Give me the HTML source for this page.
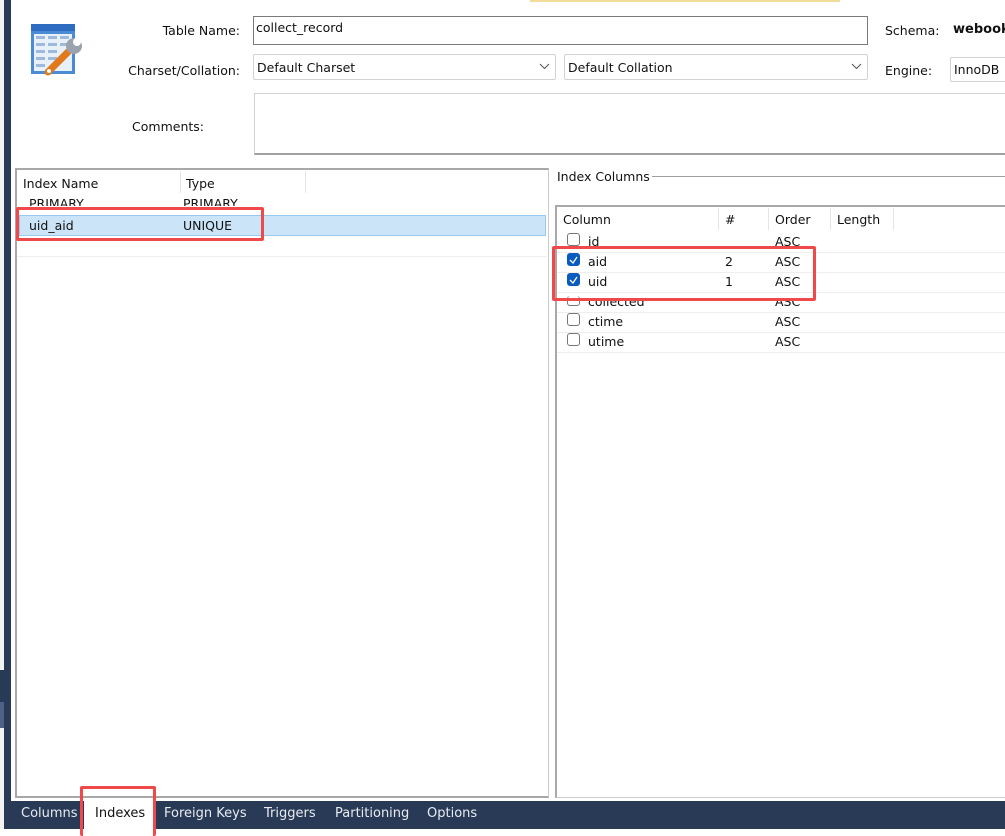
<!DOCTYPE html>
<html><head><meta charset="utf-8"><style>
*{margin:0;padding:0;box-sizing:border-box}
body{width:1005px;height:829px;overflow:hidden;background:#fff;font-family:"DejaVu Sans","Liberation Sans",sans-serif;font-size:12.5px;color:#111;position:relative}
.a{position:absolute}
.lbl{position:absolute;text-align:right;font-size:12.5px}
.box{position:absolute;border:1px solid #a9a9a9;background:#fff}
.sel{position:absolute;border:1px solid #d2d2d2;background:#fff;border-radius:2px;padding:5px 3px;font-size:12.5px}
.chev{position:absolute;right:5px;top:8px}
.cb{position:absolute;width:13px;height:13px;border:1px solid #777;border-radius:3px;background:#fff}
.cb.on{background:#0a5bc0;border-color:#0a5bc0}
.red{position:absolute;border:3px solid #f0494b;border-radius:2px}
.tab{position:absolute;top:806px;color:#e8ebf2;font-size:13px}
</style></head><body>
<div class="a" style="left:0;top:0;width:4px;height:670px;background:#f3f3f3"></div>
<div class="a" style="left:0;top:670px;width:4px;height:32px;background:#293a57"></div>
<div class="a" style="left:0;top:702px;width:4px;height:26px;background:#4d6189"></div>
<div class="a" style="left:0;top:728px;width:4px;height:101px;background:#f3f3f3"></div>
<div class="a" style="left:4px;top:0;width:7px;height:829px;background:#293a57"></div>
<div class="a" style="left:530px;top:0;width:310px;height:2px;background:#f3dc9a"></div>

<svg class="a" style="left:28px;top:22px" width="58" height="58" viewBox="0 0 58 58">
<rect x="3" y="2" width="44" height="50" fill="#4a8bd6"/>
<rect x="3" y="2" width="44" height="7" fill="#2d6cc0"/>
<rect x="6" y="12" width="38" height="37" fill="#e8f0fa"/>
<g fill="#9db9db"><rect x="8" y="14" width="9" height="3"/><rect x="20" y="14" width="9" height="3"/><rect x="32" y="14" width="9" height="3"/>
<rect x="8" y="21" width="9" height="3"/><rect x="20" y="21" width="9" height="3"/><rect x="32" y="21" width="9" height="3"/>
<rect x="8" y="28" width="9" height="3"/><rect x="20" y="28" width="9" height="3"/><rect x="8" y="35" width="9" height="3"/><rect x="20" y="35" width="9" height="3"/><rect x="8" y="42" width="9" height="3"/></g>
<path d="M20 50 L40 30" stroke="#e07a1c" stroke-width="7" stroke-linecap="round"/>
<circle cx="46" cy="24" r="8" fill="#9aa3ad"/><circle cx="49" cy="20" r="4" fill="#fff"/>
<circle cx="21" cy="49" r="2" fill="#fff"/>
</svg>

<div class="lbl" style="left:100px;width:140px;top:23px">Table Name:</div>
<div class="box" style="left:253px;top:16px;width:615px;height:29px;border-color:#7a7a7a;padding:3px 2px">collect_record</div>
<div class="lbl" style="left:100px;width:140px;top:63px">Charset/Collation:</div>
<div class="sel" style="left:253px;top:54px;width:303px;height:26px;padding-top:5px">Default Charset<svg class="chev" width="11" height="7"><path d="M1 1 L5.5 5.5 L10 1" stroke="#555" fill="none"/></svg></div>
<div class="sel" style="left:564px;top:54px;width:304px;height:26px">Default Collation<svg class="chev" width="11" height="7"><path d="M1 1 L5.5 5.5 L10 1" stroke="#555" fill="none"/></svg></div>
<div class="a" style="left:885px;top:23px">Schema:</div>
<div class="a" style="left:953px;top:22px;font-weight:bold;font-size:13px">webook</div>
<div class="a" style="left:885px;top:63px">Engine:</div>
<div class="sel" style="left:950px;top:57px;width:70px;height:25px;padding-top:4px">InnoDB</div>
<div class="lbl" style="left:100px;width:104px;top:119px">Comments:</div>
<div class="box" style="left:254px;top:93px;width:760px;height:62px;border-color:#d2d2d2;border-bottom:2px solid #a0a0a0"></div>

<div class="a" style="left:15px;top:168px;width:534px;height:630px;border:2px solid #a8a8a8;border-right:1px solid #ccc;background:#fff"></div>
<div class="a" style="left:23px;top:176px">Index Name</div>
<div class="a" style="left:180px;top:171px;width:1px;height:22px;background:#e5e5e5"></div>
<div class="a" style="left:186px;top:176px">Type</div>
<div class="a" style="left:305px;top:171px;width:1px;height:22px;background:#e5e5e5"></div>
<div class="a" style="left:29px;top:196px;height:10px;overflow:hidden">PRIMARY</div>
<div class="a" style="left:183px;top:196px;height:10px;overflow:hidden">PRIMARY</div>
<div class="a" style="left:19px;top:215px;width:527px;height:21px;background:#cce4f7;border:1px solid #99c9ef"></div>
<div class="a" style="left:29px;top:218px">uid_aid</div>
<div class="a" style="left:183px;top:218px">UNIQUE</div>
<div class="a" style="left:17px;top:256px;width:530px;height:1px;background:#eee"></div>
<div class="red" style="left:16px;top:207px;width:248px;height:34px"></div>

<div class="a" style="left:557px;top:169px">Index Columns</div>
<div class="a" style="left:652px;top:176px;width:353px;height:1px;background:#a0a0a0"></div>
<div class="a" style="left:555px;top:205px;width:460px;height:593px;border:2px solid #a8a8a8;border-right:none;border-bottom:1px solid #ccc;background:#fff"></div>
<div class="a" style="left:563px;top:212px">Column</div>
<div class="a" style="left:718px;top:208px;width:1px;height:22px;background:#e5e5e5"></div>
<div class="a" style="left:725px;top:212px">#</div>
<div class="a" style="left:768px;top:208px;width:1px;height:22px;background:#e5e5e5"></div>
<div class="a" style="left:775px;top:212px">Order</div>
<div class="a" style="left:830px;top:208px;width:1px;height:22px;background:#e5e5e5"></div>
<div class="a" style="left:837px;top:212px">Length</div>
<div class="a" style="left:893px;top:208px;width:1px;height:22px;background:#e5e5e5"></div>

<div class="cb" style="left:567px;top:233px"></div><div class="a" style="left:588px;top:234px;height:12px;overflow:hidden">id</div><div class="a" style="left:775px;top:234px;height:12px;overflow:hidden">ASC</div>
<div class="a" style="left:557px;top:252px;width:448px;height:1px;background:#eee"></div>
<div class="cb on" style="left:567px;top:253px"></div><div class="a" style="left:588px;top:254px">aid</div><div class="a" style="left:725px;top:254px">2</div><div class="a" style="left:775px;top:254px">ASC</div>
<div class="a" style="left:557px;top:272px;width:448px;height:1px;background:#eee"></div>
<div class="cb on" style="left:567px;top:273px"></div><div class="a" style="left:588px;top:274px">uid</div><div class="a" style="left:725px;top:274px">1</div><div class="a" style="left:775px;top:274px">ASC</div>
<div class="a" style="left:557px;top:292px;width:448px;height:1px;background:#eee"></div>
<div class="cb" style="left:567px;top:296px;height:10px;border-top:none"></div><div class="a" style="left:588px;top:298px;height:12px;overflow:hidden;line-height:8px">collected</div><div class="a" style="left:775px;top:298px;height:12px;overflow:hidden;line-height:8px">ASC</div>
<div class="a" style="left:557px;top:312px;width:448px;height:1px;background:#eee"></div>
<div class="cb" style="left:567px;top:313px"></div><div class="a" style="left:588px;top:314px">ctime</div><div class="a" style="left:775px;top:314px">ASC</div>
<div class="a" style="left:557px;top:332px;width:448px;height:1px;background:#eee"></div>
<div class="cb" style="left:567px;top:333px"></div><div class="a" style="left:588px;top:334px">utime</div><div class="a" style="left:775px;top:334px">ASC</div>
<div class="a" style="left:557px;top:352px;width:448px;height:1px;background:#eee"></div>
<div class="red" style="left:552px;top:246px;width:264px;height:55px"></div>
<svg class="a" style="left:567px;top:253px" width="13" height="33"><path d="M3 7 L6 10 L10 4 M3 27 L6 30 L10 24" stroke="#fff" stroke-width="1.3" fill="none"/></svg>

<div class="a" style="left:11px;top:801px;width:994px;height:28px;background:#293a57"></div>
<div class="a" style="left:84px;top:799px;width:70px;height:30px;background:#fff"></div>
<div class="red" style="left:80px;top:786px;width:76px;height:50px;border-bottom:none"></div>
<div class="tab" style="left:21px">Columns</div>
<div class="tab" style="left:95px;color:#111">Indexes</div>
<div class="tab" style="left:164px">Foreign Keys</div>
<div class="tab" style="left:264px">Triggers</div>
<div class="tab" style="left:335px">Partitioning</div>
<div class="tab" style="left:427px">Options</div>
</body></html>
